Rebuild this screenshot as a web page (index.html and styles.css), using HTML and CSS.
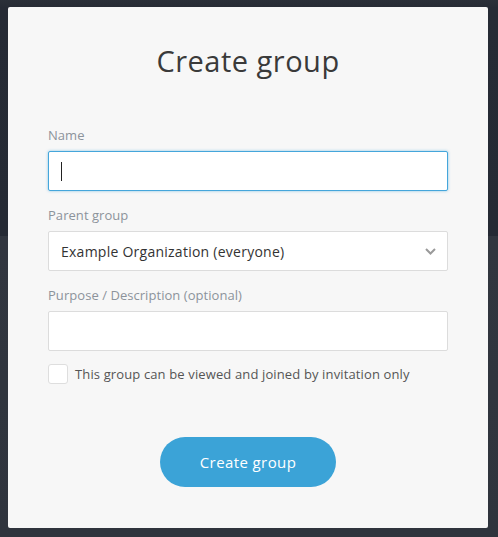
FILE: index.html
```html
<!DOCTYPE html>
<html lang="en">
<head>
<meta charset="utf-8">
<title>Create group</title>
<link rel="stylesheet" href="styles.css">
</head>
<body>
<div class="modal">
  <h1 class="title">Create group</h1>
  <div class="field">
    <label class="label">Name</label>
    <div class="input focused"><span class="caret"></span></div>
  </div>
  <div class="field">
    <label class="label">Parent group</label>
    <div class="input select">
      <span class="select-text">Example Organization (everyone)</span>
      <svg class="chevron" width="11" height="7" viewBox="0 0 11 7"><polyline points="1,1 5.5,5.5 10,1" fill="none" stroke="#9a9a9a" stroke-width="2"/></svg>
    </div>
  </div>
  <div class="field">
    <label class="label">Purpose / Description (optional)</label>
    <div class="input"></div>
  </div>
  <div class="check-row">
    <span class="checkbox"></span>
    <span class="check-label">This group can be viewed and joined by invitation only</span>
  </div>
  <div class="actions">
    <button class="btn">Create group</button>
  </div>
</div>
</body>
</html>
```
FILE: styles.css
```css
html, body {
  margin: 0;
  padding: 0;
}
body {
  width: 498px;
  height: 537px;
  overflow: hidden;
  background: linear-gradient(to bottom, #2b3039 0px, #262b35 8px, #252a34 236px, #31363f 236px, #2f343d 537px);
  font-family: "Open Sans", "Noto Sans", sans-serif;
  padding: 7px 0 0 8px;
  box-sizing: border-box;
}
.modal {
  width: 480px;
  height: 521px;
  box-sizing: border-box;
  background: #f7f7f7;
  border-radius: 2px;
  padding: 34px 40px 0 40px;
}
.title {
  margin: 0 0 45px 0;
  font-size: 29px;
  line-height: 40px;
  font-weight: 400;
  letter-spacing: 0.5px;
  color: #3a3a3a;
  text-align: center;
}
.field {
  margin-bottom: 15px;
}
.label {
  display: block;
  font-size: 13px;
  line-height: 18px;
  color: #8c939b;
  margin-bottom: 7px;
  letter-spacing: 0.05px;
}
.input {
  height: 40px;
  box-sizing: border-box;
  background: #fff;
  border: 1px solid #dcdcdc;
  border-radius: 2px;
  display: flex;
  align-items: center;
  padding: 0 12px;
}
.focused {
  border-color: #45a6db;
  box-shadow: 0 0 3px rgba(69, 166, 219, 0.6);
}
.caret {
  width: 1px;
  height: 19px;
  background: #222;
}
.select {
  justify-content: space-between;
  padding-right: 11px;
}
.select-text {
  font-size: 14px;
  letter-spacing: 0.25px;
  color: #333;
}
.chevron {
  display: block;
}
.check-row {
  display: flex;
  align-items: center;
  gap: 7px;
  margin-top: -2px;
}
.checkbox {
  width: 20px;
  height: 20px;
  box-sizing: border-box;
  background: #fff;
  border: 1px solid #dedede;
  border-radius: 3px;
}
.check-label {
  font-size: 13px;
  letter-spacing: 0.13px;
  color: #555;
}
.actions {
  display: flex;
  justify-content: center;
  margin-top: 53px;
}
.btn {
  width: 176px;
  height: 50px;
  border: none;
  border-radius: 25px;
  background: #3ba3d7;
  color: #fff;
  font-family: "Open Sans", "Noto Sans", sans-serif;
  font-size: 15px;
  font-weight: 500;
  letter-spacing: 0.4px;
  padding: 0;
}
```
